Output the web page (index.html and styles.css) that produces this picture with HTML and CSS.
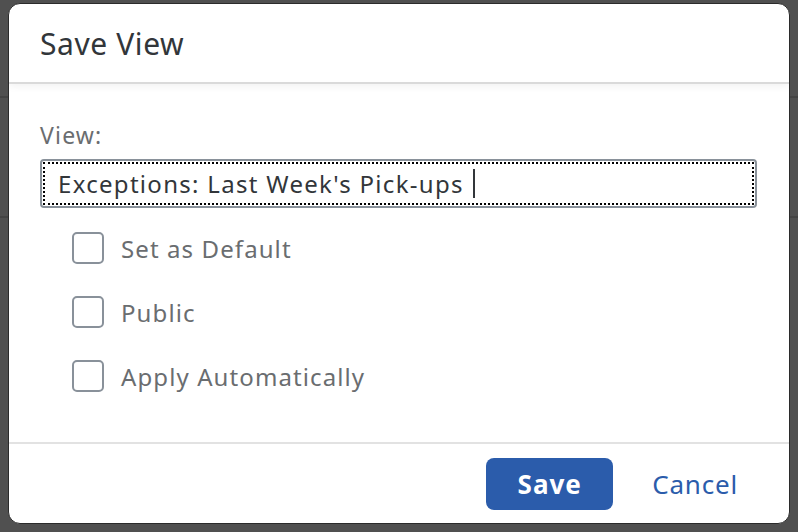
FILE: index.html
```html
<!DOCTYPE html>
<html lang="en">
<head>
    <meta charset="UTF-8">
    <meta name="viewport" content="width=device-width, initial-scale=1.0">
    <title>Save View</title>
    <link rel="stylesheet" href="styles.css">
</head>
<body>

<div class="dialog">
    <div class="dialog-header">
        <h2>Save View</h2>
    </div>

    <div class="dialog-content">
        <label for="view-name" class="field-label">View:</label>
        <div class="input-wrap">
            <input type="text" id="view-name" value="Exceptions: Last Week's Pick-ups" />
            <span class="caret"></span>
        </div>

        <div class="options">
            <label class="check-row"><span class="box"></span>Set as Default</label>
            <label class="check-row"><span class="box"></span>Public</label>
            <label class="check-row"><span class="box"></span>Apply Automatically</label>
        </div>
    </div>

    <div class="dialog-footer">
        <button class="btn-save">Save</button>
        <button class="btn-cancel">Cancel</button>
    </div>
</div>

</body>
</html>
```

FILE: styles.css
```css
body {
    font-family: "Noto Sans", Arial, sans-serif;
    margin: 0;
    height: 532px;
    overflow: hidden;
    background-color: #505050;
    background-image:
        linear-gradient(to bottom, transparent 96px, #444 96px, #444 98px, transparent 98px),
        linear-gradient(to bottom, transparent 216px, #444 216px, #444 218px, transparent 218px);
    padding: 3px 8px 0 8px;
    box-sizing: border-box;
}

.dialog {
    background-color: white;
    border: 1px solid #2b2b2b;
    border-radius: 12px;
    height: 521px;
    box-sizing: border-box;
    display: flex;
    flex-direction: column;
    overflow: hidden;
}

.dialog-header {
    height: 78px;
    border-bottom: 2px solid #dadada;
    box-shadow: 0 2px 8px rgba(0, 0, 0, 0.06);
    display: flex;
    align-items: center;
    padding-left: 31px;
    position: relative;
}

.dialog-header h2 {
    margin: 0;
    font-size: 30px;
    font-weight: normal;
    letter-spacing: 0.6px;
    color: #32363a;
}

.dialog-content {
    flex: 1;
    padding: 36px 32px 0 31px;
    border-bottom: 2px solid #e2e2e2;
}

.field-label {
    display: block;
    font-size: 23px;
    letter-spacing: 1.2px;
    color: #6a6d70;
    line-height: 30px;
    margin-bottom: 9px;
}

.input-wrap {
    position: relative;
    height: 49px;
    border: 2px solid #89919a;
    border-radius: 4px;
    box-sizing: border-box;
}

.input-wrap::after {
    content: "";
    position: absolute;
    inset: 1px;
    border: 2px dotted #000;
    pointer-events: none;
}

.input-wrap input {
    width: 100%;
    height: 100%;
    box-sizing: border-box;
    border: none;
    outline: none;
    background: transparent;
    padding: 0 0 0 16px;
    font-family: "Noto Sans", Arial, sans-serif;
    font-size: 24px;
    letter-spacing: 1.3px;
    color: #32363a;
}

.caret {
    position: absolute;
    left: 431px;
    top: 8px;
    width: 2px;
    height: 29px;
    background-color: #32363a;
}

.options {
    padding: 8px 0 0 32px;
}

.check-row {
    display: flex;
    align-items: center;
    height: 64px;
    font-size: 24px;
    letter-spacing: 1.1px;
    color: #6a6d70;
}

.check-row .box {
    width: 32px;
    height: 32px;
    border: 2px solid #89919a;
    border-radius: 5px;
    box-sizing: border-box;
    margin-right: 17px;
}

.dialog-footer {
    height: 79px;
    display: flex;
    align-items: center;
    justify-content: flex-end;
    padding-right: 31px;
}

.btn-save {
    width: 127px;
    height: 52px;
    background-color: #2b5cab;
    color: white;
    border: none;
    border-radius: 8px;
    font-family: "Noto Sans", Arial, sans-serif;
    font-size: 26px;
    font-weight: bold;
    letter-spacing: 1px;
    cursor: pointer;
}

.btn-cancel {
    background: none;
    border: none;
    color: #2b5cab;
    font-family: "Noto Sans", Arial, sans-serif;
    font-size: 26px;
    letter-spacing: 0.8px;
    padding: 0 20px;
    margin-left: 19px;
    cursor: pointer;
}
```
